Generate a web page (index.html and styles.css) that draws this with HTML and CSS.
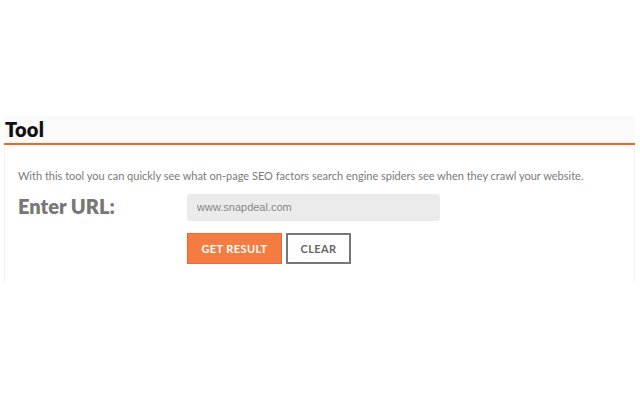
FILE: index.html
```html
<!DOCTYPE html>
<html>
<head>
<meta charset="utf-8">
<link rel="stylesheet" href="styles.css">
</head>
<body>
<div class="panel">
  <div class="panel-head"><h2 class="title">Tool</h2></div>
  <div class="panel-body">
    <p class="desc">With this tool you can quickly see what on-page SEO factors search engine spiders see when they crawl your website.</p>
    <div class="form-row">
      <label class="label">Enter URL:</label>
      <div class="field">
        <div class="input">www.snapdeal.com</div>
        <div class="buttons">
          <button class="btn btn-primary">GET RESULT</button>
          <button class="btn btn-outline">CLEAR</button>
        </div>
      </div>
    </div>
  </div>
</div>
</body>
</html>
```
FILE: styles.css
```css
html, body { margin: 0; padding: 0; background: #fff; }
body { font-family: Lato, "Open Sans", sans-serif; }
.panel { margin: 116px 0 0 4px; width: 631px; }
.panel-head {
  background: #fafafa;
  height: 27px;
  border-bottom: 2px solid #f26522;
  padding-left: 1px;
}
.title {
  margin: 0;
  font-size: 20px;
  line-height: 27px;
  font-weight: 800;
  color: #111;
  letter-spacing: 0.2px;
}
.panel-body {
  border-left: 1px solid #f2f2f2;
  border-right: 1px solid #f2f2f2;
  padding: 24px 13px 19px 13px;
}
.desc {
  margin: 0;
  font-size: 11px;
  line-height: 14px;
  color: #7a7a7a;
}
.form-row { display: flex; margin-top: 11px; }
.label {
  width: 169px;
  flex: none;
  font-size: 20px;
  font-weight: 800;
  color: #777;
  line-height: 24px;
}
.field { display: flex; flex-direction: column; gap: 12px; }
.input {
  width: 243px;
  height: 27px;
  padding-left: 10px;
  background: #ebebeb;
  border-radius: 3px;
  font-family: "Liberation Sans", Arial, sans-serif;
  font-size: 11px;
  line-height: 27px;
  color: #888;
}
.buttons { display: flex; gap: 4px; }
.btn {
  height: 31px;
  box-sizing: border-box;
  font-family: inherit;
  font-size: 11px;
  font-weight: 700;
  letter-spacing: 0.4px;
  padding: 0;
  cursor: pointer;
}
.btn-primary {
  width: 95px;
  background: #f47c43;
  border: 1px solid #ee6a2c;
  color: #fff;
}
.btn-outline {
  width: 65px;
  background: #fff;
  border: 2px solid #777;
  color: #666;
}
```
